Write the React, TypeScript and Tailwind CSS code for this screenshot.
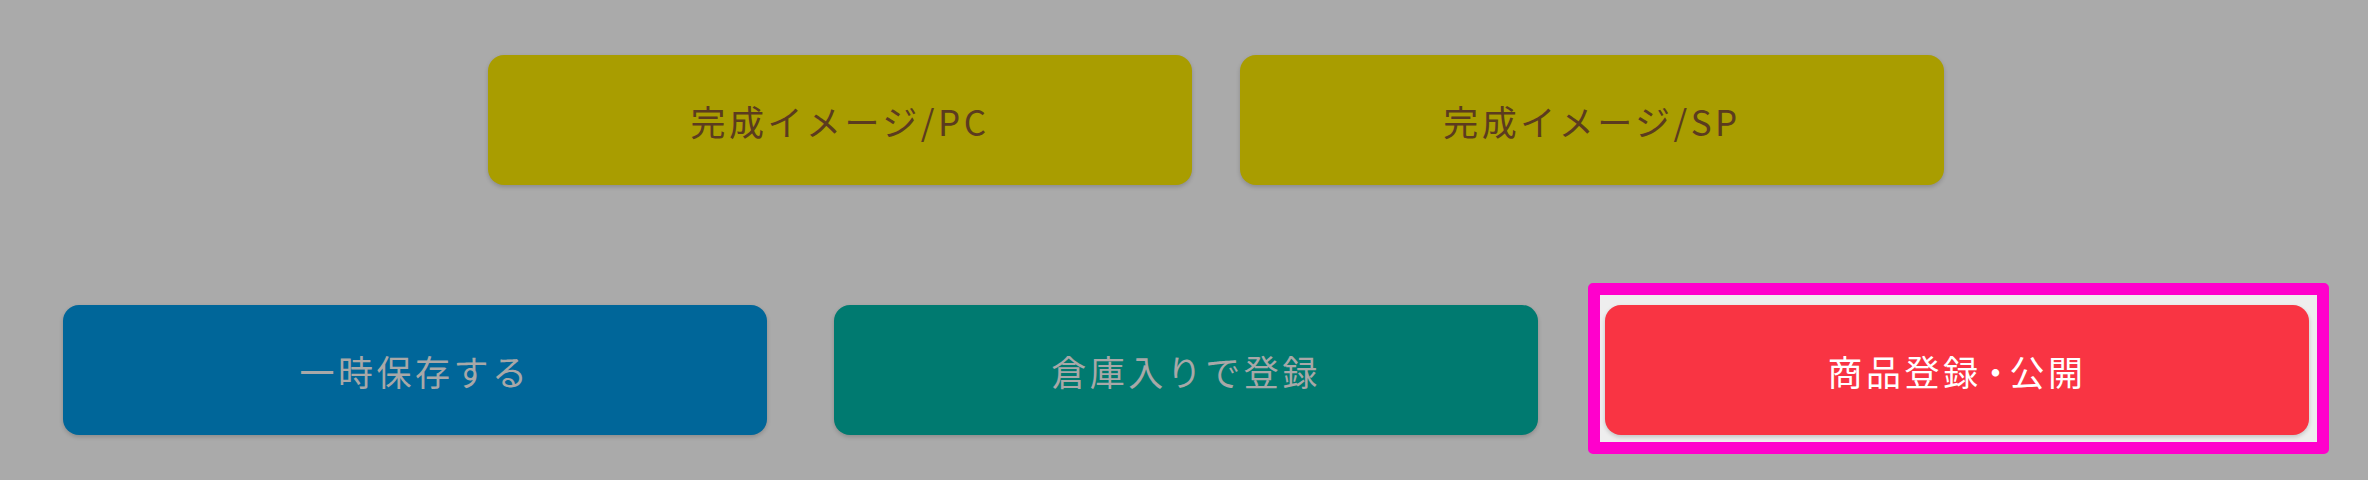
import React from "react";

const font = { fontFamily: '"Noto Sans CJK JP", "Noto Sans", sans-serif' };

export default function App() {
  return (
    <div
      className="w-[2368px] h-[480px] bg-[#aaaaaa] overflow-hidden text-[35px] leading-none tracking-[0.1em]"
      style={font}
    >
      <div className="flex gap-[48px] pl-[488px] pt-[55px]">
        <button className="w-[704px] h-[130px] rounded-[16px] bg-[#a99d00] text-[#5b3b1f] shadow-[0_2px_4px_rgba(0,0,0,0.18)] flex items-center justify-center">
          完成イメージ/PC
        </button>
        <button className="w-[704px] h-[130px] rounded-[16px] bg-[#a99d00] text-[#5b3b1f] shadow-[0_2px_4px_rgba(0,0,0,0.18)] flex items-center justify-center">
          完成イメージ/SP
        </button>
      </div>
      <div className="flex gap-[67px] pl-[63px] mt-[120px]">
        <button className="w-[704px] h-[130px] rounded-[16px] bg-[#006699] text-[#a8a8a8] shadow-[0_2px_4px_rgba(0,0,0,0.18)] flex items-center justify-center">
          一時保存する
        </button>
        <button className="w-[704px] h-[130px] rounded-[16px] bg-[#007a70] text-[#a8a8a8] shadow-[0_2px_4px_rgba(0,0,0,0.18)] flex items-center justify-center">
          倉庫入りで登録
        </button>
        <div className="relative w-[704px] h-[130px]">
          <div className="absolute left-[-17px] top-[-22px] right-[-20px] bottom-[-19px] rounded-[5px] border-[12px] border-[#ff00cc] bg-[#eeeeee]" />
          <button className="relative w-[704px] h-[130px] rounded-[16px] bg-[#f93443] text-white shadow-[0_2px_4px_rgba(0,0,0,0.18)] flex items-center justify-center">
            <span>商品登録</span>
            <span className="w-[28px] flex justify-center tracking-normal">・</span>
            <span>公開</span>
          </button>
        </div>
      </div>
    </div>
  );
}
